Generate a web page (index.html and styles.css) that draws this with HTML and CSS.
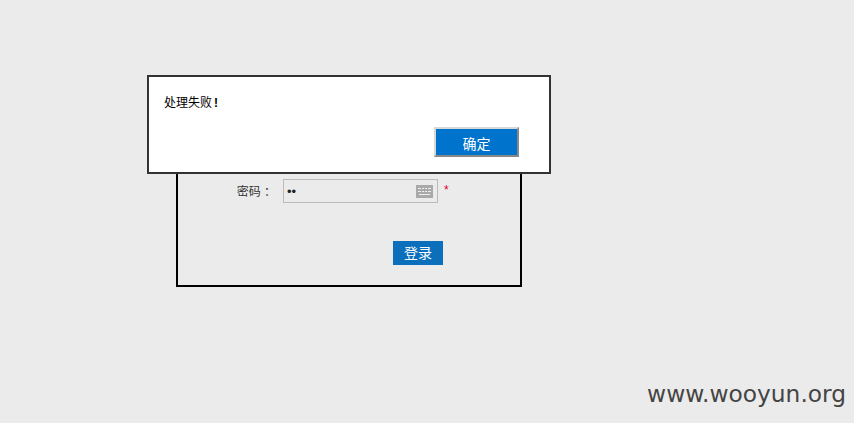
FILE: index.html
```html
<!DOCTYPE html>
<html lang="zh-CN">
<head>
  <meta charset="UTF-8" />
  <title>登录</title>
  <link rel="stylesheet" href="styles.css">
</head>
<body>
  <!-- Login box -->
  <div class="login-box">
    <div class="row">
      <label class="row-label" for="password">密码 ：</label>
      <div class="input-wrap">
        <input type="password" id="password" value="12" />
        <svg class="keyboard" width="17" height="13" viewBox="0 0 17 13">
          <rect width="17" height="13" fill="#a9a9a9" />
          <path d="M2 3.5h3M6 3.5h2M9 3.5h2M12 3.5h3M2 6.5h3M6 6.5h2M9 6.5h2M12 6.5h3M3 9.5h11" stroke="#eee" fill="none" />
        </svg>
      </div>
      <span class="required">*</span>
    </div>
    <div class="actions">
      <button class="login-btn">登录</button>
    </div>
  </div>

  <!-- Alert dialog -->
  <div class="dialog">
    <p class="message">处理失败<b class="bang">!</b></p>
    <div class="dialog-actions">
      <button class="ok-btn">确定</button>
    </div>
  </div>

  <div class="watermark">www.wooyun.org</div>
</body>
</html>
```

FILE: styles.css
```css
html,
body {
  height: 100%;
}

body {
  margin: 0;
  background: #ebebeb;
  font-family: "Liberation Sans", "Noto Sans CJK SC", sans-serif;
  color: #333;
  overflow: hidden;
}

.login-box {
  box-sizing: border-box;
  width: 346px;
  height: 188px;
  margin: 99px 0 0 176px;
  padding-top: 78px;
  border: 2px solid #000;
}

.row {
  display: flex;
  align-items: center;
  height: 24px;
}

.row-label {
  width: 98px;
  margin: 0 7px 2px 0;
  text-align: right;
  font-size: 12px;
}

.input-wrap {
  position: relative;
  width: 155px;
  height: 24px;
}

.input-wrap input {
  box-sizing: border-box;
  width: 100%;
  height: 100%;
  padding: 0 24px 0 3px;
  border: 1px solid #bbb;
  background: #ebebeb;
  font-size: 13px;
  color: #222;
}

.keyboard {
  position: absolute;
  top: 6px;
  right: 5px;
}

.required {
  margin: 0 0 2px 6px;
  font-size: 12px;
  color: #e3002b;
}

.actions {
  display: flex;
  justify-content: flex-end;
  margin-top: 38px;
  padding-right: 77px;
}

.login-btn {
  width: 50px;
  height: 24px;
  padding: 0 0 2px;
  border: none;
  background: #0b6fbb;
  color: #fff;
  font-size: 14px;
  font-family: inherit;
}

.dialog {
  position: absolute;
  top: 75px;
  left: 147px;
  box-sizing: border-box;
  width: 404px;
  height: 99px;
  padding: 18px 30px 0 15px;
  background: #fff;
  border: 2px solid #333;
}

.message {
  margin: 0;
  font-size: 12px;
  line-height: 16px;
  color: #000;
}

.bang {
  margin-left: 2px;
}

.dialog-actions {
  display: flex;
  justify-content: flex-end;
  margin-top: 16px;
}

.ok-btn {
  box-sizing: border-box;
  width: 85px;
  height: 30px;
  padding: 1px 0 0;
  border: 2px solid;
  border-color: #d8d8d8 #888 #888 #d8d8d8;
  background: #0073cc;
  color: #fff;
  font-size: 14px;
  font-family: inherit;
}

.watermark {
  position: absolute;
  right: 8px;
  bottom: 16px;
  font-family: "DejaVu Sans", sans-serif;
  font-size: 23.3px;
  color: #444;
}
```
